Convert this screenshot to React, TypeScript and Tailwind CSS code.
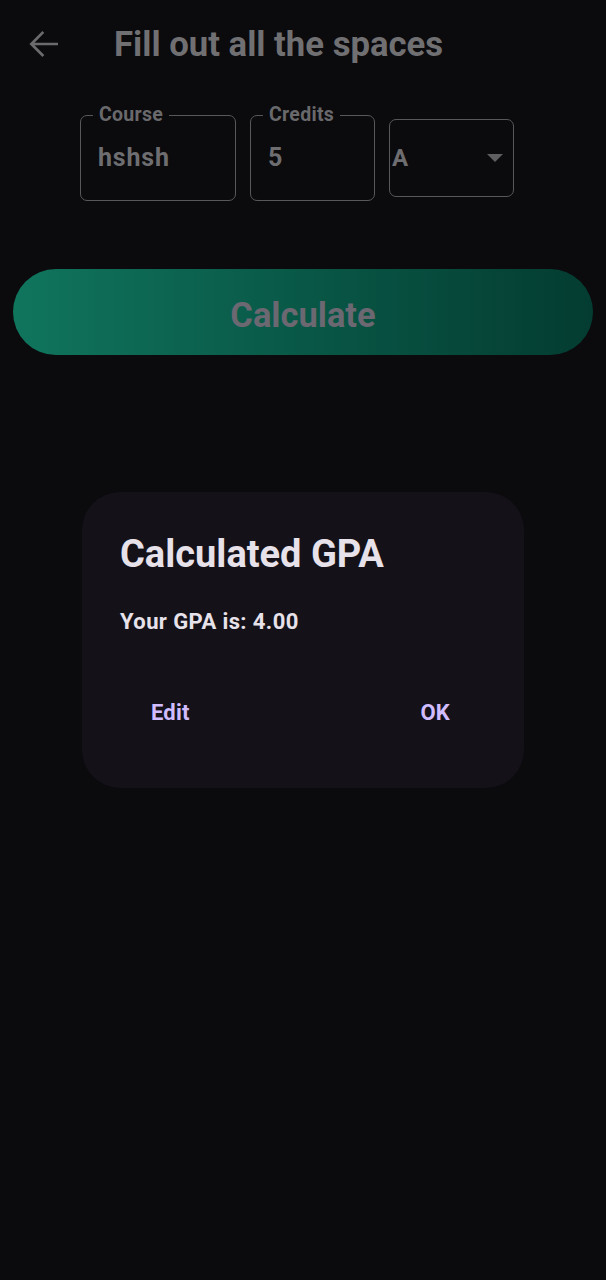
import React from "react";

function BackArrow() {
  return (
    <svg width="38" height="38" viewBox="0 0 24 24" fill="none">
      <path d="M20 12H4.5M11 5l-7 7 7 7" stroke="#6b6b6e" strokeWidth="1.7" strokeLinecap="square" strokeLinejoin="miter" />
    </svg>
  );
}

function OutlinedField({ label, value, width }: { label: string; value: string; width: string }) {
  return (
    <div className={`relative h-[86px] ${width} rounded-[7px] border-[1.5px] border-[#58585b] flex items-center pl-[17px]`}>
      <span className="absolute -top-[13px] left-[12px] bg-[#0b0a0d] px-[6px] text-[19.5px] leading-[24px] font-bold tracking-[0.3px] text-[#69696c]">
        {label}
      </span>
      <span className="text-[25px] font-bold tracking-[0.8px] text-[#6e6e71]">{value}</span>
    </div>
  );
}

export default function App() {
  return (
    <div
      className="relative w-[606px] h-[1280px] bg-[#0b0a0d] overflow-hidden"
      style={{ fontFamily: "Roboto, 'Noto Sans', sans-serif" }}
    >
      <header className="h-[88px] flex items-center">
        <div className="ml-[25px] w-[38px] h-[38px] flex items-center justify-center">
          <BackArrow />
        </div>
        <h1 className="ml-[51px] text-[34.7px] font-bold text-[#707073] leading-none">Fill out all the spaces</h1>
      </header>

      <div className="mt-[27px] flex items-center gap-[14px] pl-[80px]">
        <OutlinedField label="Course" value="hshsh" width="w-[156px]" />
        <OutlinedField label="Credits" value="5" width="w-[125px]" />
        <div className="h-[78px] w-[125px] rounded-[7px] border-[1.5px] border-[#58585b] flex items-center justify-between pl-[2px] pr-[10px]">
          <span className="text-[24px] font-bold text-[#6e6e71]">A</span>
          <svg width="16" height="8" viewBox="0 0 16 8">
            <path d="M0 0h16L8 8z" fill="#5f5f62" />
          </svg>
        </div>
      </div>

      <div className="mx-[13px] mt-[68px] h-[86px] rounded-full bg-gradient-to-r from-[#10755d] to-[#043c31] flex items-center justify-center pt-[8px]">
        <span className="text-[34.5px] font-bold text-[#6b6872]">Calculate</span>
      </div>

      <div className="absolute inset-0 flex items-center justify-center">
        <div className="w-[442px] h-[296px] rounded-[38px] bg-[#141118] pt-[37px] px-[38px]">
          <h2 className="text-[38px] leading-[50px] font-bold text-[#e7e1ea]">Calculated GPA</h2>
          <p className="mt-[27px] text-[22px] leading-[31px] font-bold tracking-[0.4px] text-[#e7e1ea]">Your GPA is: 4.00</p>
          <div className="mt-[44px] h-[63px] flex items-center justify-between pl-[31px] pr-[36px]">
            <span className="text-[22px] font-bold tracking-[0.2px] text-[#d0bcff]">Edit</span>
            <span className="text-[22px] font-bold tracking-[0.2px] text-[#d0bcff]">OK</span>
          </div>
        </div>
      </div>
    </div>
  );
}
